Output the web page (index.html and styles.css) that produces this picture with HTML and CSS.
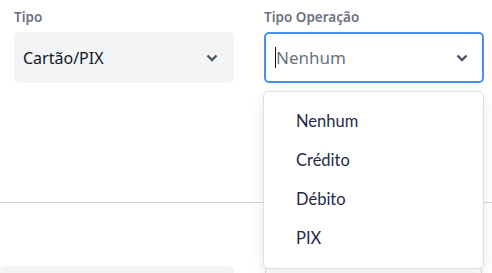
FILE: index.html
```html
<!DOCTYPE html>
<html>
<head>
	<meta charset="utf-8">
	<title>Filtro</title>
	<link rel="stylesheet" href="styles.css">
</head>
<body>
	<div class="form">
		<!-- linha de filtros -->
		<div class="row">
			<div class="field">
				<label>Tipo</label>
				<div class="select">
					<span class="value">Cartão/PIX</span>
					<svg class="chevron" viewBox="0 0 12 8" width="12" height="8"><path d="M1.5 1.5 L6 6 L10.5 1.5" fill="none" stroke="#4b5563" stroke-width="2.4"/></svg>
				</div>
			</div>
			<div class="field">
				<label>Tipo Operação</label>
				<div class="select focus">
					<span class="caret"></span>
					<span class="value placeholder">Nenhum</span>
					<svg class="chevron" viewBox="0 0 12 8" width="12" height="8"><path d="M1.5 1.5 L6 6 L10.5 1.5" fill="none" stroke="#4b5563" stroke-width="2.4"/></svg>
				</div>
				<!-- opções -->
				<ul class="menu">
					<li>Nenhum</li>
					<li>Crédito</li>
					<li>Débito</li>
					<li>PIX</li>
				</ul>
			</div>
		</div>

		<hr class="divider">

		<div class="row bottom">
			<div class="select"></div>
			<div class="select outline"></div>
		</div>
	</div>
</body>
</html>
```
FILE: styles.css
```css
* {
	margin: 0;
	padding: 0;
	box-sizing: border-box;
}

ul, li {
	list-style: none;
}

body {
	background: #fff;
	font-family: "Noto Sans", sans-serif;
}

.form {
	width: 492px;
	height: 273px;
	overflow: hidden;
}

.row {
	display: grid;
	grid-template-columns: 220px 220px;
	column-gap: 30px;
	padding: 7px 0 0 14px;
}

.field {
	position: relative;
}

.field > label {
	display: block;
	font-size: 13.5px;
	font-weight: 600;
	line-height: 20px;
	color: #6b7280;
	margin-bottom: 5px;
}

.select {
	height: 51px;
	background-color: #f3f4f6;
	border-radius: 5px;
	display: flex;
	align-items: center;
	padding: 0 16px 0 9px;
	position: relative;
}

.select .value {
	flex: 1;
	font-size: 16px;
	color: #111827;
}

/* campo em foco */
.select.focus {
	background-color: #fff;
	border: 2px solid #4a8ef0;
	padding-left: 9px;
	padding-right: 14px;
}

.select .placeholder {
	color: #6b7280;
	font-size: 17px;
}

.caret {
	width: 1px;
	height: 21px;
	background: #111;
}

/* lista de opções */
.menu {
	position: absolute;
	left: -1px;
	top: 84px;
	width: 221px;
	padding: 10px 0;
	background: #fff;
	border: 1px solid #dcdfe4;
	border-radius: 6px;
	box-shadow: 0 4px 14px rgba(0, 0, 0, 0.09);
	z-index: 2;
}

.menu > li {
	height: 39px;
	line-height: 39px;
	padding-left: 32px;
	font-family: "Lato", sans-serif;
	font-size: 16.5px;
	color: #1f2a48;
}

.divider {
	border: none;
	border-top: 1px solid #d1d5db;
	margin-top: 119px;
}

.row.bottom {
	padding: 63px 0 0 0;
	grid-template-columns: 234px 217px;
	column-gap: 31px;
}

.select.outline {
	background: #fff;
	border: 1px solid #d1d5db;
}
```
